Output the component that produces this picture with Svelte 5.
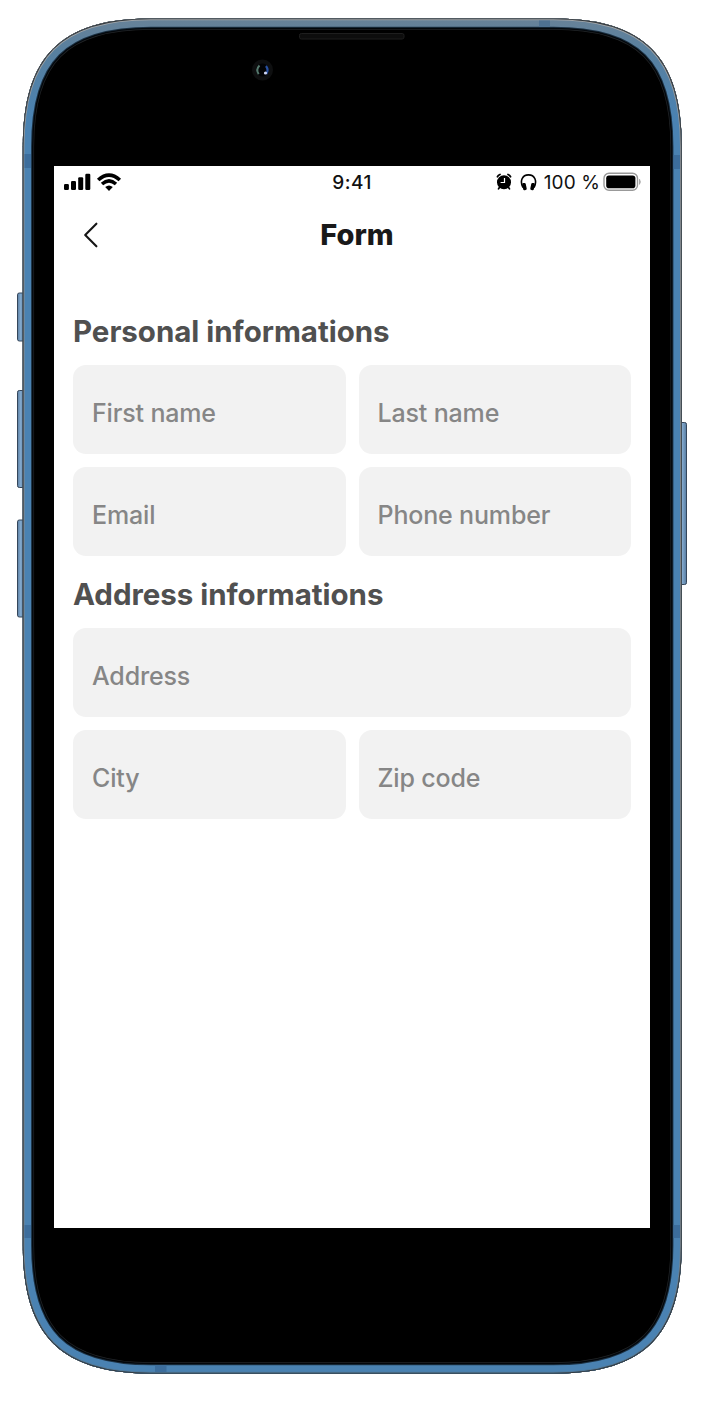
<script>
  const sections = [
    {
      title: 'Personal informations',
      fields: [
        { label: 'First name' },
        { label: 'Last name' },
        { label: 'Email' },
        { label: 'Phone number' }
      ]
    },
    {
      title: 'Address informations',
      fields: [{ label: 'Address', wide: true }, { label: 'City' }, { label: 'Zip code' }]
    }
  ];

  const body =
    'M22.8 146.5C22.8 56.5 60.8 18.5 150.8 18.5H553.7C643.7 18.5 681.7 56.5 681.7 146.5V1245.5C681.7 1335.5 643.7 1373.5 553.7 1373.5H150.8C60.8 1373.5 22.8 1335.5 22.8 1245.5Z';

  const leftButtons = [
    { y: 293, h: 48 },
    { y: 390.5, h: 97 },
    { y: 520, h: 97 }
  ];
</script>

<div class="stage">
  <svg class="device" width="703" height="1407" viewBox="0 0 703 1407" aria-hidden="true">
    <defs>
      <linearGradient id="rim" gradientUnits="userSpaceOnUse" x1="0" y1="18" x2="0" y2="1374">
        <stop offset="0" stop-color="#688298" />
        <stop offset="0.025" stop-color="#58809f" />
        <stop offset="0.075" stop-color="#4a82b2" />
        <stop offset="1" stop-color="#4a82b2" />
      </linearGradient>
      <linearGradient id="edge" gradientUnits="userSpaceOnUse" x1="0" y1="18" x2="0" y2="1374">
        <stop offset="0" stop-color="#a0a5a9" />
        <stop offset="0.1" stop-color="#8b9297" />
        <stop offset="0.9" stop-color="#77838c" />
        <stop offset="1" stop-color="#4e7899" />
      </linearGradient>
      <linearGradient id="button" x1="0" y1="0" x2="1" y2="0">
        <stop offset="0" stop-color="#5b7fa3" />
        <stop offset="0.45" stop-color="#83a9cd" />
        <stop offset="1" stop-color="#567ba0" />
      </linearGradient>
      <clipPath id="shell"><path d={body} /></clipPath>
    </defs>

    {#each leftButtons as b}
      <rect x="17.5" y={b.y} width="7" height={b.h} rx="1.8" fill="url(#button)" stroke="#35465a" />
    {/each}
    <rect x="679" y="422.5" width="7.5" height="162" rx="1.8" fill="url(#button)" stroke="#35465a" />

    <path d={body} fill="#000" />
    <g clip-path="url(#shell)" fill="none">
      <path d={body} stroke="#222528" stroke-width="22.6" />
      <path d={body} stroke="#03070b" stroke-width="21.2" />
      <path d={body} stroke="#1b3042" stroke-width="18.6" />
      <path d={body} stroke="url(#rim)" stroke-width="16.6" />
      <path d={body} stroke="url(#edge)" stroke-width="3.4" />
      <path d={body} stroke="#33383c" stroke-width="1.6" />
      <g fill="#3c6d9c">
        <rect x="24.5" y="154" width="6.5" height="14" />
        <rect x="673.5" y="155" width="6.5" height="14" />
        <rect x="24.5" y="1225" width="6.5" height="13" />
        <rect x="673.5" y="1225" width="6.5" height="13" />
        <rect x="539" y="20.5" width="11" height="6.5" fill="#4e7191" />
        <rect x="155" y="1365.5" width="11.5" height="6.5" />
      </g>
    </g>

    <rect x="299.5" y="33.5" width="104.5" height="5.5" rx="1.8" fill="#0d0d0d" stroke="#1e1e1e" />
    <circle cx="262.5" cy="70" r="10.5" fill="#0e0f10" />
    <circle cx="262.5" cy="70" r="6.5" fill="#020305" />
    <path d="M259.500 65.500q-4 4-.8 8.600" fill="none" stroke="#55786d" stroke-width="2" />
    <path d="M266 66q3 4 .3 8" fill="none" stroke="#2850a0" stroke-width="2.200" />
    <circle cx="265.500" cy="73" r="1.600" fill="#cfd6f5" />
  </svg>

  <main class="screen">
    <div class="status">
      <div class="left">
        <svg width="58" height="20" viewBox="0 0 58 20">
          <rect x="0" y="12" width="4.900" height="6" rx="1.200" />
          <rect x="7" y="9" width="5" height="9" rx="1.200" />
          <rect x="14.200" y="5.200" width="5" height="12.800" rx="1.200" />
          <rect x="21.300" y="1.700" width="5" height="16.300" rx="1.200" />
          <g fill="none" stroke="#000">
            <path d="M34.200 8Q45 -1.800 55.800 8" stroke-width="3.700" />
            <path d="M38 12Q45 5.800 52 12" stroke-width="3.500" />
          </g>
          <path d="M41.200 15Q45 12 48.800 15L45 18.900Z" />
        </svg>
      </div>
      <span class="time">9:41</span>
      <div class="right">
        <svg class="alarm" width="16" height="18" viewBox="0 0 16 18">
          <circle cx="8" cy="9.300" r="7" />
          <path d="M1.500 3.700Q2.200 2.200 4 1.500M14.500 3.700Q13.800 2.200 12 1.500" fill="none" stroke="#000" stroke-width="1.800" stroke-linecap="round" />
          <path d="M3.400 14.500L2.500 15.900M12.600 14.500L13.500 15.900" stroke="#000" stroke-width="1.700" stroke-linecap="round" />
          <path d="M8.500 5V9.500H4.600" fill="none" stroke="#fff" stroke-width="1.200" />
        </svg>
        <svg class="headphones" width="17" height="18" viewBox="0 0 17 18">
          <path d="M3 14.500C-.5 8 2.200 1.900 8.500 1.900S17.500 8 14 14.500" fill="none" stroke="#000" stroke-width="1.600" />
          <rect x="2.600" y="10" width="3.600" height="7.300" rx="1.400" transform="rotate(-12 4.200 13.300)" />
          <rect x="10.800" y="10" width="3.600" height="7.300" rx="1.400" transform="rotate(12 12.800 13.300)" />
        </svg>
        <span class="percent">100 %</span>
        <svg class="battery" width="39" height="20" viewBox="0 0 39 20">
          <rect x="1" y="1.300" width="33.500" height="17" rx="5" fill="none" stroke="#999" stroke-width="1.400" />
          <rect x="3.200" y="3.500" width="29.200" height="12.700" rx="2.800" />
          <path d="M36.500 7.200q1.800 2.600 0 5.200z" fill="#999" stroke="#999" stroke-width=".6" />
        </svg>
      </div>
    </div>

    <header>
      <svg class="back" width="16" height="26" viewBox="0 0 16 26" role="img" aria-label="Back">
        <path d="M13.400 1.700L2.200 13L13.400 24.300" fill="none" stroke="#151515" stroke-width="2.100" stroke-linecap="round" stroke-linejoin="round" />
      </svg>
      <h1>Form</h1>
    </header>

    <form>
      {#each sections as section}
        <h2>{section.title}</h2>
        <div class="grid">
          {#each section.fields as field}
            <div class="field" class:wide={field.wide}>{field.label}</div>
          {/each}
        </div>
      {/each}
    </form>
  </main>
</div>

<style>
  :global(body) {
    background: #fff;
  }
  .stage {
    position: relative;
    box-sizing: border-box;
    width: 703px;
    height: 1407px;
    padding: 166px 53px 179px 54px;
    overflow: hidden;
    font-family: Inter, 'Liberation Sans', sans-serif;
  }
  .device {
    position: absolute;
    inset: 0;
  }
  svg {
    display: block;
  }
  .screen {
    position: relative;
    box-sizing: border-box;
    height: 1062px;
    background: #fff;
  }
  .status {
    display: grid;
    grid-template-columns: 1fr auto 1fr;
    align-items: center;
    height: 32px;
    padding: 0 8px 0 9px;
    color: #111;
  }
  .left {
    padding-left: 1px;
  }
  .time {
    margin-right: 1px;
    font-size: 19px;
    font-weight: 500;
    letter-spacing: 0.5px;
  }
  .right {
    display: flex;
    justify-content: flex-end;
    align-items: center;
  }
  .headphones {
    margin: 0 7px 0 8px;
  }
  .percent {
    margin-right: 3px;
    font-size: 19px;
    letter-spacing: 0.1px;
    white-space: nowrap;
  }
  header {
    display: grid;
    grid-template-columns: 1fr auto 1fr;
    align-items: center;
    height: 74px;
    padding: 0 19px 0 29px;
  }
  h1 {
    margin: 0;
    color: #191919;
    font-size: 29px;
    line-height: 36px;
    font-weight: 800;
    letter-spacing: 0;
  }
  form {
    padding: 42px 19px 0;
  }
  h2 {
    margin: 0;
    height: 51px;
    color: #505050;
    font-size: 29.5px;
    line-height: 34px;
    font-weight: 700;
    letter-spacing: -0.03px;
    white-space: nowrap;
  }
  .grid {
    display: grid;
    grid-template-columns: 1fr 1fr;
    gap: 13px;
    margin-bottom: 21px;
  }
  .field {
    box-sizing: border-box;
    height: 89px;
    padding: 6px 19px 0;
    display: flex;
    align-items: center;
    border-radius: 13px;
    background: #f2f2f2;
    color: #868686;
    font-size: 25px;
    font-weight: 450;
    letter-spacing: -0.16px;
  }
  .wide {
    grid-column: 1 / -1;
  }
</style>
